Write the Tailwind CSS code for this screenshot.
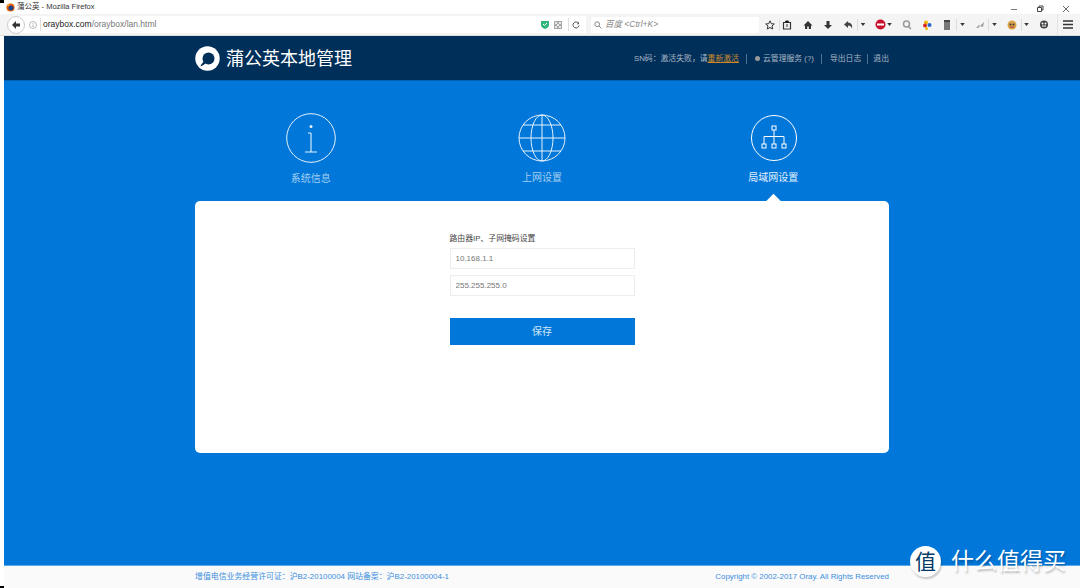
<!DOCTYPE html>
<html lang="zh-CN">
<head>
  <meta charset="UTF-8" />
  <title>蒲公英 - Mozilla Firefox</title>
  <script src="https://cdn.jsdelivr.net/npm/@tailwindcss/browser@4"></script>
</head>
<body class="relative w-[1080px] h-[588px] overflow-hidden flex flex-col bg-white font-['Liberation_Sans','Noto_Sans_CJK_SC',sans-serif]">
  <!-- screen corners -->
  <div class="absolute left-0 top-0 w-[4px] h-[3px] bg-black"></div>
  <div class="absolute left-0 bottom-0 w-[4px] h-[2px] bg-black"></div>

  <!-- title bar -->
  <div class="h-[14px] flex items-center pl-[6px] text-[7.5px] text-[#333] relative">
    <svg class="w-[9px] h-[9px] mr-[2px]" viewBox="0 0 10 10"><circle cx="5" cy="5" r="4.5" fill="#e66000"/><circle cx="5.500" cy="5.500" r="2.800" fill="#1f3f8f"/><path d="M1 3q2-3 5-2.500-3 .5-3 3z" fill="#f5a623"/></svg>
    <span>蒲公英 - Mozilla Firefox</span>
    <div class="absolute right-[10px] top-[5px] flex gap-[18px] items-center">
      <svg class="w-[8px] h-[8px]" viewBox="0 0 8 8"><path d="M1 4.500h6" stroke="#777" stroke-width="1"/></svg>
      <svg class="w-[8px] h-[8px]" viewBox="0 0 8 8"><path d="M1.500 2.500h4v4h-4zM3 2.500v-1.500h4v4h-1.500" fill="none" stroke="#444" stroke-width="1"/></svg>
      <svg class="w-[8px] h-[8px]" viewBox="0 0 8 8"><path d="M1 1l6 6M7 1l-6 6" stroke="#555" stroke-width="0.900"/></svg>
    </div>
  </div>

  <!-- toolbar -->
  <div class="h-[22px] bg-[#f4f4f4] border-b border-[#ddd] flex items-center pl-[7px]">
    <div class="w-[579px] h-[17px] bg-white rounded-l-full flex items-center relative">
      <div class="w-[18px] h-[18px] rounded-full border border-[#ccc] bg-white flex items-center justify-center">
        <svg class="w-[10px] h-[10px]" viewBox="0 0 10 10"><path d="M5 1L1 5l4 4V6.500h4v-3H5z" fill="#333"/></svg>
      </div>
      <svg class="w-[8px] h-[8px] ml-[4px]" viewBox="0 0 8 8"><circle cx="4" cy="4" r="3.500" fill="none" stroke="#999" stroke-width="0.700"/><path d="M4 3.500v2.500M4 2v0.800" stroke="#999" stroke-width="0.800"/></svg>
      <div class="w-px h-[13px] bg-[#ddd] ml-[3px]"></div>
      <span class="text-[8.500px] ml-[2px] text-[#222]">oraybox.com<span class="text-[#777]">/oraybox/lan.html</span></span>
      <div class="absolute left-[534px] top-[2px] flex items-center h-[13px]">
        <svg class="w-[8px] h-[9px]" viewBox="0 0 8 9"><path d="M0 1h8v4q0 2.500-4 4q-4-1.500-4-4z" fill="#2fb67c"/><path d="M2 4l1.500 1.500L6 3" stroke="#fff" fill="none"/></svg>
        <svg class="w-[8px] h-[8px] ml-[5px]" viewBox="0 0 8 8"><rect width="8" height="8" fill="#a8a8a8"/><path d="M1 1h2v2H1zM5 1h2v2H5zM3 3h2v2H3zM1 5h2v2H1zM5 5h2v2H5z" fill="#e8e8e8"/></svg>
        <div class="w-px h-[13px] bg-[#ddd] ml-[6px]"></div>
        <svg class="w-[8px] h-[8px] ml-[3px]" viewBox="0 0 8 8"><path d="M6.500 2.200A3 3 0 1 0 7 4.500" fill="none" stroke="#555" stroke-width="1"/><path d="M7 0.800v2.500H4.800z" fill="#555"/></svg>
      </div>
    </div>
    <div class="w-[168px] h-[16px] ml-[5px] bg-white rounded-[2px] flex items-center pl-[3px]">
      <svg class="w-[8px] h-[8px]" viewBox="0 0 8 8"><circle cx="3.200" cy="3.200" r="2.400" fill="none" stroke="#888"/><path d="M5 5l2.500 2.500" stroke="#888"/></svg>
      <span class="text-[8.500px] italic text-[#888] ml-[3px]">百度 &lt;Ctrl+K&gt;</span>
    </div>
    <div class="flex items-center h-full">
      <svg class="w-[10px] h-[10px] ml-[6px]" viewBox="0 0 10 10"><path d="M5 .8l1.300 2.900 3 .3-2.300 2 .7 3L5 7.500 2.300 9l.7-3L.7 4l3-.3z" fill="none" stroke="#333" stroke-width="1"/></svg>
      <div class="w-px h-[12px] bg-[#ddd] ml-[4px]"></div>
      <svg class="w-[10px] h-[10px] ml-[2px]" viewBox="0 0 10 10"><path d="M1.500 2.500h7v6.500h-7z" fill="none" stroke="#333" stroke-width="1.200"/><path d="M3.500 2.500V1h3v1.500M5 4v3" stroke="#333"/></svg>
      <svg class="w-[10px] h-[10px] ml-[11px]" viewBox="0 0 10 10"><path d="M5 1L.5 5.500H2V9h2.200V6.500h1.600V9H8V5.500h1.500z" fill="#333"/></svg>
      <svg class="w-[10px] h-[10px] ml-[10px]" viewBox="0 0 10 10"><path d="M3.500 1h3v4H9L5 9 1 5h2.500z" fill="#333"/></svg>
      <svg class="w-[10px] h-[10px] ml-[10px]" viewBox="0 0 10 10"><path d="M5 1L1 4.500 5 8V5.500q3 0 4 3 1-5.500-4-6z" fill="#444"/></svg>
      <div class="w-px h-[12px] bg-[#ddd] ml-[4px]"></div>
      <svg class="w-[6px] h-[3px] ml-[2px]" viewBox="0 0 6 4"><path d="M0 0h6L3 4z" fill="#333"/></svg>
      <svg class="w-[11px] h-[11px] ml-[9px]" viewBox="0 0 11 11"><circle cx="5.500" cy="5.500" r="5" fill="#c8102e"/><rect x="2" y="4.500" width="7" height="2" fill="#fff"/></svg>
      <svg class="w-[5px] h-[3px] ml-[1px]" viewBox="0 0 6 4"><path d="M0 0h6L3 4z" fill="#333"/></svg>
      <svg class="w-[10px] h-[10px] ml-[10px]" viewBox="0 0 10 10"><circle cx="4.500" cy="4" r="3" fill="none" stroke="#999" stroke-width="1.500"/><path d="M6 6l3 3" stroke="#999" stroke-width="1.500"/></svg>
      <svg class="w-[10px] h-[10px] ml-[10px]" viewBox="0 0 10 10"><circle cx="4" cy="2.500" r="2" fill="#f2b705"/><circle cx="7.500" cy="5" r="2" fill="#2266cc"/><circle cx="3" cy="5.500" r="2" fill="#d62828"/><circle cx="4.500" cy="8.500" r="1.500" fill="#f2b705"/></svg>
      <svg class="w-[8px] h-[11px] ml-[11px]" viewBox="0 0 8 11"><rect x="1" y="1" width="6" height="10" fill="#777"/><rect x="1" y="1" width="6" height="2" fill="#444"/></svg>
      <div class="w-px h-[12px] bg-[#ddd] ml-[5px]"></div>
      <svg class="w-[5px] h-[3px] ml-[3px]" viewBox="0 0 6 4"><path d="M0 0h6L3 4z" fill="#333"/></svg>
      <svg class="w-[10px] h-[8px] ml-[10px]" viewBox="0 0 10 8"><path d="M1 7l3-3 1 1 4-4-1 5-3-1-2 2z" fill="#999"/></svg>
      <div class="w-px h-[12px] bg-[#ddd] ml-[3px]"></div>
      <svg class="w-[5px] h-[3px] ml-[3px]" viewBox="0 0 6 4"><path d="M0 0h6L3 4z" fill="#333"/></svg>
      <svg class="w-[10px] h-[10px] ml-[10px]" viewBox="0 0 10 10"><circle cx="5" cy="5" r="4.500" fill="#d9a34a"/><circle cx="3.500" cy="4.500" r="1" fill="#333"/><circle cx="6.500" cy="4.500" r="1" fill="#333"/><path d="M3 7h4" stroke="#a33"/></svg>
      <div class="w-px h-[12px] bg-[#ddd] ml-[4px]"></div>
      <svg class="w-[5px] h-[3px] ml-[2px]" viewBox="0 0 6 4"><path d="M0 0h6L3 4z" fill="#333"/></svg>
      <svg class="w-[10px] h-[9px] ml-[10px]" viewBox="0 0 10 9"><circle cx="5" cy="4.500" r="4" fill="#444"/><circle cx="3.500" cy="3.500" r="1" fill="#fff"/><circle cx="6.500" cy="3.500" r="1" fill="#fff"/><path d="M3 6h4" stroke="#fff"/></svg>
      <div class="w-px h-full bg-[#e4e4e4] ml-[8px]"></div>
      <svg class="w-[10px] h-[9px] ml-[5px]" viewBox="0 0 10 9"><path d="M0 1h10M0 4.500h10M0 8h10" stroke="#333" stroke-width="1.300"/></svg>
    </div>
  </div>

  <div class="flex-1 pl-[4px] flex flex-col">
    <!-- header -->
    <header class="h-[45px] bg-[#002f5a] border-b border-[#0062b4] flex justify-center">
      <div class="w-[694px] flex items-center justify-between">
        <div class="flex items-center gap-[6px]">
          <svg class="w-[25px] h-[25px]" viewBox="0 0 25 25"><circle cx="12.500" cy="12.500" r="12.200" fill="#fff"/><circle cx="13.500" cy="12.500" r="6" fill="#002f5a"/><path d="M9 15c-1 1.500-3 3-3.500 5.500 2.500-1 3.500-2 5-3z" fill="#002f5a"/></svg>
          <span class="text-[18px] text-white leading-none mt-[1px]">蒲公英本地管理</span>
        </div>
        <div class="flex items-center text-[7.850px] text-[#a9b6c4] leading-none mt-[1px]">
          <span>SN码：激活失败，请<span class="text-[#c98a2b] underline">重新激活</span></span>
          <span class="w-px h-[10px] bg-[#50708f] ml-[7px] mr-[8px]"></span>
          <span class="w-[5px] h-[5px] rounded-full bg-[#9a9a9a] mr-[3px]"></span>
          <span>云管理服务 (?)</span>
          <span class="w-px h-[10px] bg-[#50708f] ml-[7px] mr-[8px]"></span>
          <span>导出日志</span>
          <span class="w-px h-[10px] bg-[#50708f] ml-[6px] mr-[5px]"></span>
          <span>退出</span>
        </div>
      </div>
    </header>

    <!-- main -->
    <main class="flex-1 bg-[#0077d9] flex flex-col items-center">
      <div class="w-[694px] grid grid-cols-3 pt-[32px] text-center">
        <div class="flex flex-col items-center text-[#a3cff2]">
          <svg class="w-[50px] h-[50px]" viewBox="0 0 50 50" fill="none" stroke="#e6f2fb"><circle cx="25" cy="25" r="24.300"/><path d="M25 20v19M22 20h3M19 39h12" stroke-width="1.100"/><circle cx="25" cy="13.500" r="1.500" fill="#e6f2fb" stroke="none"/></svg>
          <span class="text-[10px] leading-none mt-[11px]">系统信息</span>
        </div>
        <div class="flex flex-col items-center text-[#a3cff2]">
          <svg class="w-[48px] h-[48px] mt-[1px]" viewBox="0 0 48 48" fill="none" stroke="#e6f2fb" stroke-width="1"><circle cx="24" cy="24" r="23"/><ellipse cx="24" cy="24" rx="11" ry="23"/><path d="M24 1v46M1 24h46M5 11h38M5 37h38"/></svg>
          <span class="text-[10px] leading-none mt-[11px]">上网设置</span>
        </div>
        <div class="flex flex-col items-center text-[#e3f1fc]">
          <svg class="w-[46px] h-[46px] mt-[2px] ml-[1px]" viewBox="0 0 46 46" fill="none" stroke="#fff"><circle cx="23" cy="23" r="22.500"/><rect x="21" y="11" width="4" height="4"/><rect x="11" y="29" width="4" height="4"/><rect x="21" y="29" width="4" height="4"/><rect x="31" y="29" width="4" height="4"/><path d="M23 15v14M13 29v-7.500h20V29"/></svg>
          <span class="text-[10px] leading-none mt-[12px]">局域网设置</span>
        </div>
      </div>

      <!-- card -->
      <div class="relative w-[694px] h-[252px] mt-[17px] bg-white rounded-[5px] flex flex-col items-center pt-[34px]">
        <div class="absolute -top-[5px] left-[573px] w-[11px] h-[11px] bg-white rotate-45"></div>
        <div class="w-[185px] flex flex-col">
          <label class="text-[7.850px] leading-none text-[#444] mb-[5px]">路由器IP、子网掩码设置</label>
          <input class="h-[21px] border border-[#ededed] px-[5px] text-[8px] text-[#777] mb-[6px]" value="10.168.1.1" />
          <input class="h-[21px] border border-[#ededed] px-[5px] text-[8px] text-[#777]" value="255.255.255.0" />
          <button class="h-[27px] mt-[22px] bg-[#0077d9] text-[10px] text-[#cfe6f8]">保存</button>
        </div>
      </div>
    </main>

    <!-- footer -->
    <footer class="h-[23px] bg-[#fafafa] border-t border-[#5aa9e8] flex justify-center">
      <div class="w-[694px] flex items-center justify-between text-[7.900px] text-[#3a8ede]">
        <span>增值电信业务经营许可证：沪B2-20100004 网站备案：沪B2-20100004-1</span>
        <span>Copyright © 2002-2017 Oray. All Rights Reserved</span>
      </div>
    </footer>
  </div>

  <!-- watermark -->
  <div class="absolute left-[910px] top-[546px] flex items-center">
    <div class="w-[31px] h-[31px] rounded-full bg-white text-[#003a66] text-[21px] leading-[31px] text-center shadow-[1px_2px_2px_rgba(0,0,0,0.2)]">值</div>
    <span class="ml-[10px] text-[23px] leading-none text-white [text-shadow:1px_2px_2px_rgba(0,0,0,0.25)]">什么值得买</span>
  </div>
</body>
</html>
